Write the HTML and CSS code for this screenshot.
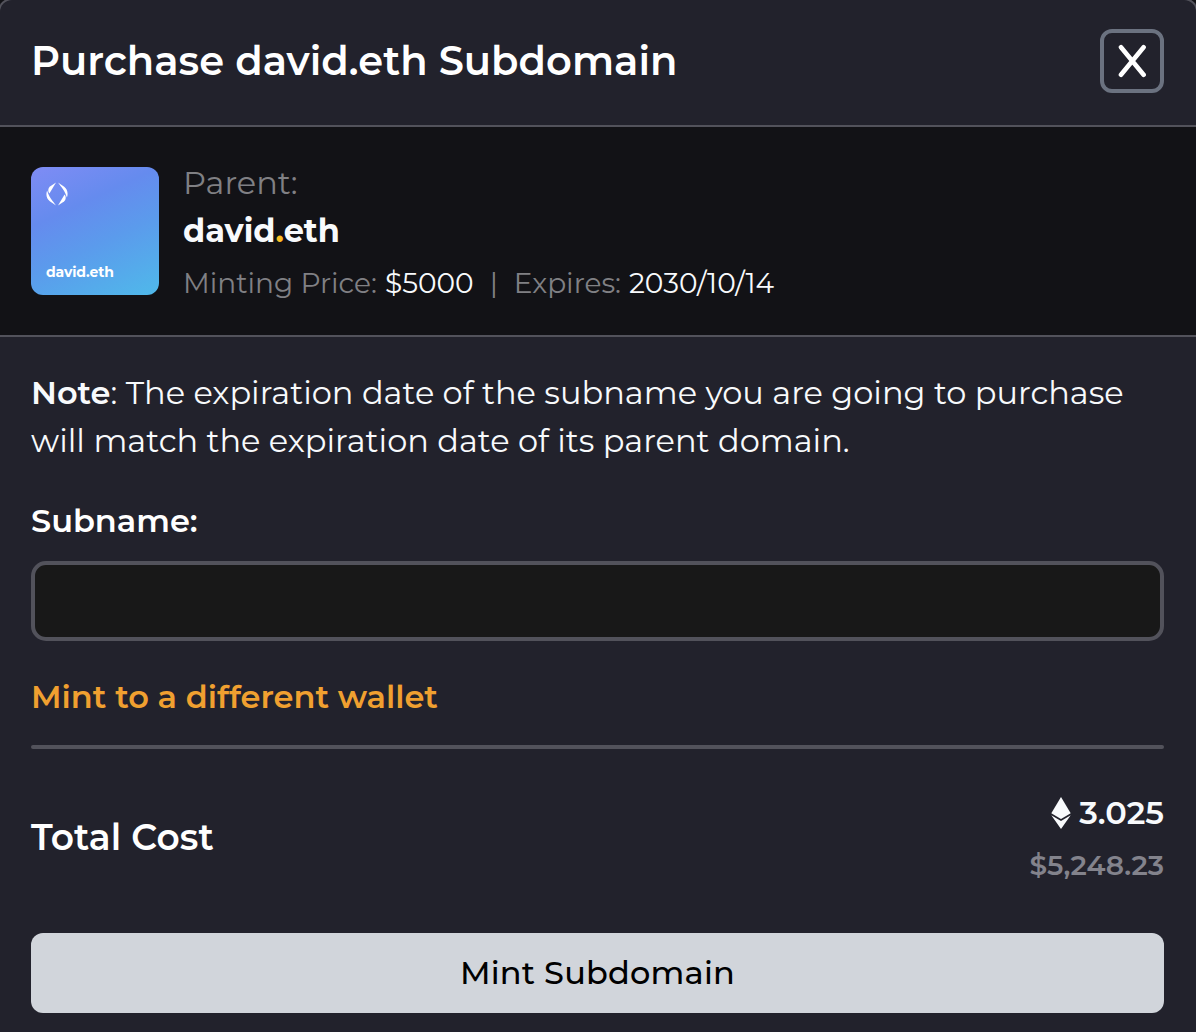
FILE: index.html
```html
<!DOCTYPE html>
<html lang="en">
<head>
    <meta charset="UTF-8">
    <meta name="viewport" content="width=device-width, initial-scale=1.0">
    <title>Purchase david.eth Subdomain</title>
    <link rel="stylesheet" href="styles.css">
</head>
<body>
    <div class="modal">
        <div class="modal-header">
            <h1>Purchase david.eth Subdomain</h1>
            <button type="button" class="close-button" aria-label="Close">
                <svg width="28" height="34" viewBox="0 0 28 34" fill="none" stroke="#fff" stroke-width="4.6" stroke-linecap="round">
                    <path d="M3 3.2L25.6 30.8M25.6 3.2L3 30.8"/>
                </svg>
            </button>
        </div>

        <div class="parent">
            <div class="avatar">
                <svg width="22" height="24" viewBox="0 0 22 24" fill="#fff">
                    <path d="M10 0.5L3.4 11.6C1.8 9.8 1.8 6.4 4 4.6Z"/>
                    <path d="M1.1 8.4C-0.4 12.6 0.6 16.8 3.8 19.2L10 23.4C6.6 18.6 3 15 1.1 8.4Z"/>
                    <path d="M12 23.5L18.6 12.4C20.2 14.2 20.2 17.6 18 19.4Z"/>
                    <path d="M20.9 15.6C22.4 11.4 21.4 7.2 18.2 4.8L12 0.6C15.4 5.4 19 9 20.9 15.6Z"/>
                </svg>
                <span>david.eth</span>
            </div>
            <div class="parent-info">
                <div class="parent-label">Parent:</div>
                <div class="parent-name">david<span class="dot">.</span>eth</div>
                <div class="parent-meta">
                    <span>Minting Price:</span>
                    <span class="value">$5000</span>
                    <span class="separator">|</span>
                    <span>Expires:</span>
                    <span class="value">2030/10/14</span>
                </div>
            </div>
        </div>

        <form class="modal-body">
            <p class="note">
                <b>Note</b>: The expiration date of the subname you are going to purchase<br>
                will match the expiration date of its parent domain.
            </p>
            <label for="subname">Subname:</label>
            <input type="text" id="subname">
            <a class="wallet-link">Mint to a different wallet</a>
            <div class="divider"></div>
            <div class="total">
                <div class="total-label">Total Cost</div>
                <div class="total-values">
                    <div class="eth">
                        <svg width="20" height="32" viewBox="0 0 20 32" fill="#f8fafc">
                            <path d="M10 0L19.7 16.3L10 22L0.3 16.3Z"/>
                            <path d="M0.3 18.2L10 23.9L19.7 18.2L10 32Z"/>
                        </svg>
                        <span>3.025</span>
                    </div>
                    <div class="usd">$5,248.23</div>
                </div>
            </div>
            <button type="submit" class="mint-button">Mint Subdomain</button>
        </form>
    </div>
</body>
</html>
```
FILE: styles.css
```css
* {
    box-sizing: border-box;
}
body {
    margin: 0;
    background-color: #121216;
    font-family: Montserrat, Inter, sans-serif;
    color: #fff;
}
.modal {
    height: 1032px;
    background-color: #22222c;
    border-radius: 12px 12px 0 0;
    box-shadow: 0 0 0 2px #52525b;
    overflow: hidden;
}
.modal-header {
    display: flex;
    align-items: center;
    justify-content: space-between;
    height: 127px;
    padding: 0 32px 4px 31px;
    border-bottom: 2px solid #52525b;
}
h1 {
    margin: 0;
    font-size: 40px;
    font-weight: 600;
    line-height: 56px;
    letter-spacing: 0.03px;
}
.close-button {
    display: flex;
    align-items: center;
    justify-content: center;
    width: 64px;
    height: 64px;
    padding: 0;
    background: none;
    border: 4px solid #6b7280;
    border-radius: 12px;
}
.parent {
    display: flex;
    gap: 24px;
    height: 210px;
    padding: 40px 31px;
    background-color: #121216;
    border-bottom: 2px solid #52525b;
}
.avatar {
    display: flex;
    flex-direction: column;
    justify-content: space-between;
    width: 128px;
    height: 128px;
    padding: 15px 15px 14px;
    border-radius: 12px;
    background: linear-gradient(155deg, #7f8cf5 0%, #658bee 32%, #5b9bec 58%, #4fb9ea 100%);
}
.avatar span {
    font-size: 14px;
    font-weight: 700;
    line-height: 18px;
    letter-spacing: -0.1px;
}
.parent-info {
    margin-top: -8px;
    white-space: nowrap;
}
.parent-label {
    font-size: 32px;
    line-height: 48px;
    color: #808084;
}
.parent-name {
    font-size: 32px;
    font-weight: 700;
    line-height: 48px;
    color: #f8fafc;
}
.dot {
    color: #fbbf24;
}
.parent-meta {
    display: flex;
    gap: 8px;
    margin-top: 6px;
    font-size: 28px;
    line-height: 44px;
    color: #808084;
}
.separator {
    margin: 0 8px;
}
.value {
    color: #f8fafc;
}
.modal-body {
    display: flex;
    flex-direction: column;
    padding: 32px 32px 0 31px;
}
.note {
    margin: 0 0 32px;
    font-size: 32px;
    line-height: 48px;
    letter-spacing: 0.01px;
    color: #f8fafc;
    white-space: nowrap;
}
.note b {
    font-weight: 600;
}
label {
    align-self: flex-start;
    font-size: 32px;
    font-weight: 600;
    line-height: 48px;
}
input {
    height: 80px;
    margin: 16px 0 32px;
    padding: 0 20px;
    border: 4px solid #52525b;
    border-radius: 15px;
    background-color: #181818;
    color: #fff;
    font: inherit;
    font-size: 32px;
}
.wallet-link {
    align-self: flex-start;
    font-size: 32px;
    font-weight: 600;
    line-height: 48px;
    color: #f0a030;
}
.divider {
    height: 4px;
    margin: 24px 0 40px;
    border-radius: 2px;
    background-color: #52525b;
}
.total {
    display: flex;
    align-items: center;
    justify-content: space-between;
    height: 96px;
    margin-bottom: 48px;
}
.total-label {
    font-size: 36px;
    font-weight: 600;
    line-height: 56px;
    letter-spacing: 0.1px;
}
.total-values {
    display: flex;
    flex-direction: column;
    align-items: flex-end;
}
.eth {
    display: flex;
    align-items: center;
    gap: 8px;
    height: 48px;
    font-size: 32px;
    font-weight: 600;
    line-height: 48px;
    color: #f8fafc;
}
.usd {
    margin-top: 8px;
    font-size: 28px;
    font-weight: 600;
    line-height: 40px;
    color: #83838c;
}
.mint-button {
    height: 80px;
    padding: 0 0 2px;
    border: none;
    border-radius: 12px;
    background-color: #d1d5db;
    color: #000;
    font: inherit;
    font-size: 32px;
    font-weight: 500;
    letter-spacing: 0.2px;
    cursor: pointer;
}
```
